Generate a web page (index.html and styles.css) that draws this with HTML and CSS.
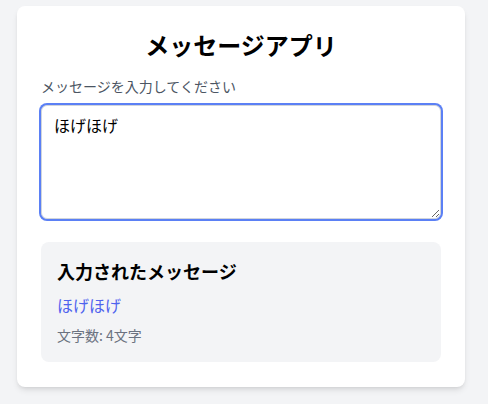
FILE: index.html
```html
<!DOCTYPE html>
<html lang="ja">
<head>
<meta charset="utf-8">
<title>メッセージアプリ</title>
<link rel="stylesheet" href="styles.css">
</head>
<body>
<div class="page">
  <div class="card">
    <h1 class="title">メッセージアプリ</h1>
    <label class="label" for="msg">メッセージを入力してください</label>
    <textarea id="msg" class="input" rows="4" autofocus>ほげほげ</textarea>
    <div class="result">
      <h2 class="result-title">入力されたメッセージ</h2>
      <p class="result-text">ほげほげ</p>
      <p class="result-count">文字数: 4文字</p>
    </div>
  </div>
</div>
</body>
</html>
```

FILE: styles.css
```css
* { box-sizing: border-box; }
html, body { margin: 0; padding: 0; }
body {
  background: #f3f4f6;
  font-family: "Noto Sans CJK JP", "Noto Sans", sans-serif;
  color: #000;
  height: 404px;
  overflow: hidden;
}
.page {
  padding: 6px 0 0 17px;
}
.card {
  width: 448px;
  background: #fff;
  border-radius: 8px;
  box-shadow: 0 4px 6px -1px rgba(0,0,0,0.1), 0 2px 4px -2px rgba(0,0,0,0.1);
  padding: 24px 24px 25px;
  display: flex;
  flex-direction: column;
}
.title {
  margin: 0 0 16px;
  font-size: 24px;
  line-height: 30px;
  font-weight: 700;
  text-align: center;
}
.label {
  display: block;
  font-size: 14px;
  line-height: 20px;
  color: #4b5563;
  margin-bottom: 9px;
}
.input {
  display: block;
  width: 100%;
  height: 114px;
  padding: 7px 12px;
  font-family: inherit;
  font-size: 16px;
  line-height: 24px;
  color: #000;
  border: 1px solid #d1d5db;
  border-radius: 6px;
  box-shadow: 0 0 0 2px #5b80f5;
  outline: none;
  resize: vertical;
  margin: 0 0 23px;
}
.result {
  background: #f3f4f6;
  border-radius: 8px;
  padding: 15px 16px 17px;
}
.result-title {
  margin: 0 0 8px;
  font-size: 18px;
  line-height: 28px;
  font-weight: 700;
}
.result-text {
  margin: 0 0 8px;
  font-size: 16px;
  line-height: 24px;
  color: #4f63ee;
}
.result-count {
  margin: 0;
  font-size: 14px;
  line-height: 20px;
  color: #6b7280;
}
```
